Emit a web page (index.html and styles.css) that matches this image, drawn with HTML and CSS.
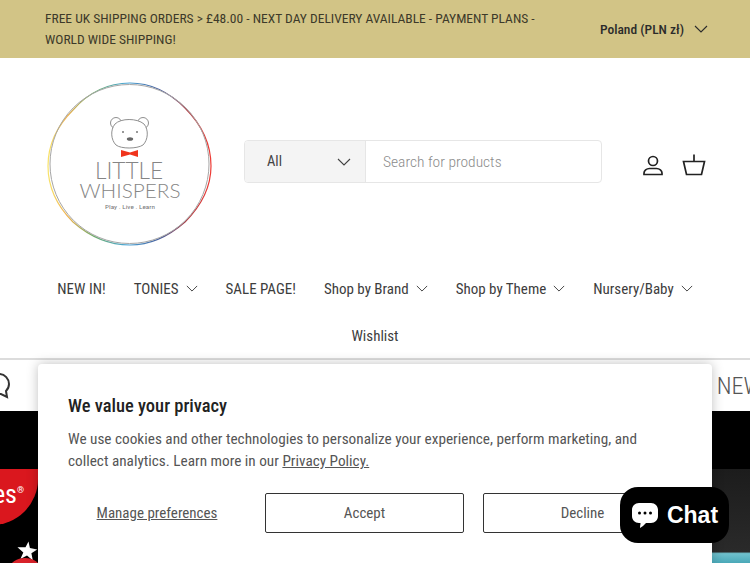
FILE: index.html
```html
<!DOCTYPE html>
<html lang="en">
<head>
  <meta charset="UTF-8">
  <meta name="viewport" content="width=device-width, initial-scale=1.0">
  <title>Little Whispers</title>
  <link rel="stylesheet" href="styles.css">
</head>
<body>
  <div class="announcement">
    <p class="announcement-text">FREE UK SHIPPING ORDERS &gt; £48.00 - NEXT DAY DELIVERY AVAILABLE - PAYMENT PLANS - WORLD WIDE SHIPPING!</p>
    <div class="currency">
      <span>Poland (PLN zł)</span>
      <svg class="chevron chevron-lg" viewBox="0 0 14 8"><path d="M1 1l6 6 6-6"/></svg>
    </div>
  </div>

  <header class="header">
    <a class="logo">
      <svg viewBox="0 0 166 168" width="166" height="168">
        <defs>
          <linearGradient id="ring" x1="0" y1="0" x2="1" y2="0">
            <stop offset="0" stop-color="#f8e36a"/>
            <stop offset="0.12" stop-color="#eeb04e"/>
            <stop offset="0.28" stop-color="#6fae6a"/>
            <stop offset="0.48" stop-color="#4aa6d6"/>
            <stop offset="0.7" stop-color="#4a5a98"/>
            <stop offset="0.85" stop-color="#b04048"/>
            <stop offset="1" stop-color="#ee3a34"/>
          </linearGradient>
        </defs>
        <path d="M1 84C1 62 10 44 26 28C42 10 62 1 83 1C104 1 122 10 138 26C154 42 164 62 164 84C164 106 154 124 138 140C122 154 104 163 83 163C62 163 42 154 26 140C10 124 1 106 1 84Z" fill="none" stroke="url(#ring)" stroke-width="1.200"/>
        <circle cx="82.500" cy="82" r="79.500" fill="none" stroke="#a6a6a6" stroke-width="1"/>
        <g fill="#fff" stroke="#8f8f8f" stroke-width="1">
          <circle cx="69" cy="41" r="5.500"/>
          <circle cx="96" cy="41" r="5.500"/>
          <path d="M68 42C74 36 90 36 97 42C102 48 101 58 96 63C90 67 74 67 69 63C64 58 63 48 68 42Z"/>
        </g>
        <circle cx="76" cy="50" r="1" fill="#777"/>
        <circle cx="90" cy="50" r="1" fill="#777"/>
        <ellipse cx="83" cy="57" rx="3.200" ry="1.800" fill="#666"/>
        <path d="M74 68L83 70.500L91 68V75L83 72.500L74 75Z" fill="#f0341c"/>
        <text x="82" y="97" class="logo-little" textLength="68" lengthAdjust="spacingAndGlyphs">LITTLE</text>
        <text x="83" y="116" class="logo-whispers" textLength="101" lengthAdjust="spacingAndGlyphs">WHISPERS</text>
        <text x="83" y="127" class="logo-tag" textLength="50" lengthAdjust="spacingAndGlyphs">Play . Live . Learn</text>
      </svg>
    </a>

    <form class="search">
      <div class="search-type">
        <span>All</span>
        <svg class="chevron chevron-lg" viewBox="0 0 14 8"><path d="M1 1l6 6 6-6"/></svg>
      </div>
      <div class="search-input">Search for products</div>
    </form>

    <div class="header-icons">
      <svg width="24" height="24" viewBox="0 0 24 24" class="icon"><circle cx="12" cy="8" r="4.500"/><path d="M3 21.500V20C3 17.500 5.500 15.500 8.500 15.500H15.500C18.500 15.500 21 17.500 21 20V21.500Z"/></svg>
      <svg width="24" height="24" viewBox="0 0 24 24" class="icon"><path d="M12 1.500V8.500M1.500 8.500H22.500L19.500 21.500H4.500Z"/></svg>
    </div>
  </header>

  <nav class="nav">
    <a>NEW IN!</a>
    <a>TONIES <svg class="chevron" viewBox="0 0 14 8"><path d="M1 1l6 6 6-6"/></svg></a>
    <a>SALE PAGE!</a>
    <a>Shop by Brand <svg class="chevron" viewBox="0 0 14 8"><path d="M1 1l6 6 6-6"/></svg></a>
    <a>Shop by Theme <svg class="chevron" viewBox="0 0 14 8"><path d="M1 1l6 6 6-6"/></svg></a>
    <a>Nursery/Baby <svg class="chevron" viewBox="0 0 14 8"><path d="M1 1l6 6 6-6"/></svg></a>
    <a class="nav-wishlist">Wishlist</a>
  </nav>

  <div class="marquee">
    <svg class="marquee-icon" width="30" height="30" viewBox="0 0 30 30"><path d="M3 13C3 7 8 3 13 3C19 3 23 8 23 13C23 16 22 18 20 20L21 26L15 23C8 24 3 19 3 13Z"/></svg>
    <span class="marquee-text">. NEW</span>
  </div>

  <section class="hero">
    <div class="hero-badge"><span>es<sup>®</sup></span></div>
    <svg class="hero-star" width="22" height="22" viewBox="0 0 30 30"><path d="M17 2L19 11L29 13L21 18L23 28L15 21L6 26L10 17L2 10L13 10Z" fill="#fff"/></svg>
    <div class="hero-dot"></div>
    <div class="hero-photo"></div>
  </section>

  <div class="cookie">
    <h2>We value your privacy</h2>
    <p>We use cookies and other technologies to personalize your experience, perform marketing, and collect analytics. Learn more in our <a>Privacy Policy.</a></p>
    <div class="cookie-actions">
      <a class="cookie-manage">Manage preferences</a>
      <button class="cookie-btn">Accept</button>
      <button class="cookie-btn">Decline</button>
    </div>
  </div>

  <div class="chat">
    <svg width="28" height="28" viewBox="0 0 28 28"><path d="M8 2H20C24 2 27 5 27 9V15C27 19 24 22 20 22H15C13 24 11 26 9 27C9 25 9.500 23.500 9.500 22H8C4 22 1 19 1 15V9C1 5 4 2 8 2Z" fill="#fff"/><circle cx="8.500" cy="12" r="1.500"/><circle cx="14" cy="12" r="1.500"/><circle cx="19.500" cy="12" r="1.500"/></svg>
    <span>Chat</span>
  </div>
</body>
</html>
```

FILE: styles.css
```css
/* General Reset */
* {
  margin: 0;
  padding: 0;
  box-sizing: border-box;
}

html, body {
  height: 100%;
  overflow: hidden;
}

body {
  font-family: 'Roboto', Arial, sans-serif;
  font-stretch: 75%;
  font-weight: 300;
  font-size: 16px;
  color: #2b2b2b;
  background: #fff;
  position: relative;
}

.chevron {
  width: 12px;
  height: 7px;
  margin-left: 7px;
  fill: none;
  stroke: currentColor;
  stroke-width: 1.100;
}

.chevron-lg {
  width: 14px;
  height: 8px;
}

/* Announcement */
.announcement {
  height: 58px;
  background: #d2c486;
  padding: 0 42px 0 45px;
  display: flex;
  align-items: center;
  justify-content: space-between;
}

.announcement-text {
  width: 510px;
  font-size: 13.500px;
  font-weight: 400;
  line-height: 21px;
  color: #3d3a2a;
}

.currency {
  display: flex;
  align-items: center;
  gap: 3px;
  font-size: 13.500px;
  font-weight: 500;
}

/* Header */
.header {
  height: 207px;
  padding: 24px 44px 0 47px;
  display: flex;
  align-items: flex-start;
}

.logo {
  width: 166px;
  height: 168px;
  flex-shrink: 0;
}

.logo-little,
.logo-whispers {
  fill: #858585;
  text-anchor: middle;
  font-family: 'Lato', Arial, sans-serif;
  font-stretch: normal;
  font-weight: 300;
}

.logo-little {
  font-size: 24px;
}

.logo-whispers {
  font-size: 20px;
}

.logo-tag {
  font-size: 6px;
  fill: #777;
  font-weight: 400;
  text-anchor: middle;
}

.search {
  width: 358px;
  height: 43px;
  margin: 58px 0 0 31px;
  display: flex;
  border: 1px solid #e6e6e6;
  border-radius: 4px;
  overflow: hidden;
}

.search-type {
  width: 121px;
  background: #f4f4f4;
  border-right: 1px solid #e6e6e6;
  padding: 0 14px 0 22px;
  display: flex;
  align-items: center;
  justify-content: space-between;
  font-size: 14.500px;
  font-weight: 400;
  color: #444;
}

.search-input {
  flex: 1;
  padding-left: 17px;
  display: flex;
  align-items: center;
  font-size: 15.500px;
  color: #8b8b8b;
}

.header-icons {
  margin: 71px 0 0 auto;
  display: flex;
  gap: 17px;
}

.icon {
  fill: none;
  stroke: #222;
  stroke-width: 1.700;
}

/* Navigation */
.nav {
  height: 95px;
  padding: 0 40px;
  display: flex;
  flex-wrap: wrap;
  justify-content: center;
  align-content: flex-start;
  column-gap: 28px;
  border-bottom: 2px solid #dcdcdc;
}

.nav a {
  height: 47px;
  display: flex;
  align-items: center;
  font-size: 15px;
  font-weight: 400;
  color: #3d3d3d;
  white-space: nowrap;
}

.nav-wishlist {
  flex-basis: 100%;
  justify-content: center;
}

/* Marquee */
.marquee {
  height: 51px;
  display: flex;
  align-items: center;
  justify-content: space-between;
  overflow: hidden;
}

.marquee-icon {
  margin-left: -14px;
  fill: none;
  stroke: #333;
  stroke-width: 2;
}

.marquee-text {
  font-size: 24px;
  color: #555;
  white-space: nowrap;
  margin-right: -12px;
}

/* Hero image */
.hero {
  height: 152px;
  background: #000;
  position: relative;
  overflow: hidden;
}

.hero-badge {
  position: absolute;
  left: -62px;
  top: 58px;
  width: 100px;
  height: 56px;
  background: #da171e;
  border-radius: 0 0 46px 0;
  color: #fff;
  font-size: 26px;
  font-weight: 400;
  text-align: right;
  padding: 10px 14px 0 0;
}

.hero-badge sup {
  font-size: 9px;
  font-weight: normal;
}

.hero-star {
  position: absolute;
  left: 16px;
  top: 129px;
}

.hero-dot {
  position: absolute;
  left: 10px;
  top: 147px;
  width: 30px;
  height: 20px;
  border-radius: 50%;
  background: #d8222a;
}

.hero-photo {
  position: absolute;
  right: 0;
  top: 58px;
  width: 38px;
  height: 94px;
  background: linear-gradient(#1c1c1c 0, #2a2a2a 88%, #6fc0cc 90%, #4aa8b8 100%);
}

/* Cookie banner */
.cookie {
  position: absolute;
  left: 38px;
  top: 364px;
  width: 674px;
  height: 199px;
  background: #fff;
  border-radius: 4px 4px 0 0;
  box-shadow: 0 0 12px rgba(0, 0, 0, 0.25);
  padding: 28px 30px 0;
}

.cookie h2 {
  font-size: 18.500px;
  font-weight: 500;
  color: #222;
  line-height: 28px;
  margin-bottom: 8px;
}

.cookie p {
  max-width: 585px;
  font-size: 15.250px;
  font-weight: 400;
  line-height: 22px;
  color: #555;
}

.cookie p a {
  text-decoration: underline;
}

.cookie-actions {
  margin-top: 21px;
  display: flex;
  align-items: center;
  gap: 19px;
}

.cookie-manage {
  width: 178px;
  font-size: 15px;
  font-weight: 400;
  text-align: center;
  text-decoration: underline;
  color: #555;
}

.cookie-btn {
  flex: 1;
  height: 40px;
  background: #fff;
  border: 1px solid #333;
  border-radius: 2px;
  font: inherit;
  font-size: 15px;
  font-weight: 400;
  color: #555;
}

/* Shopify chat button */
.chat {
  position: absolute;
  left: 620px;
  top: 487px;
  width: 109px;
  height: 56px;
  background: #000;
  border-radius: 18px;
  color: #fff;
  display: flex;
  align-items: center;
  justify-content: center;
  gap: 8px;
  font-family: 'Liberation Sans', Arial, sans-serif;
  font-stretch: normal;
  font-size: 23px;
  font-weight: bold;
}
```
